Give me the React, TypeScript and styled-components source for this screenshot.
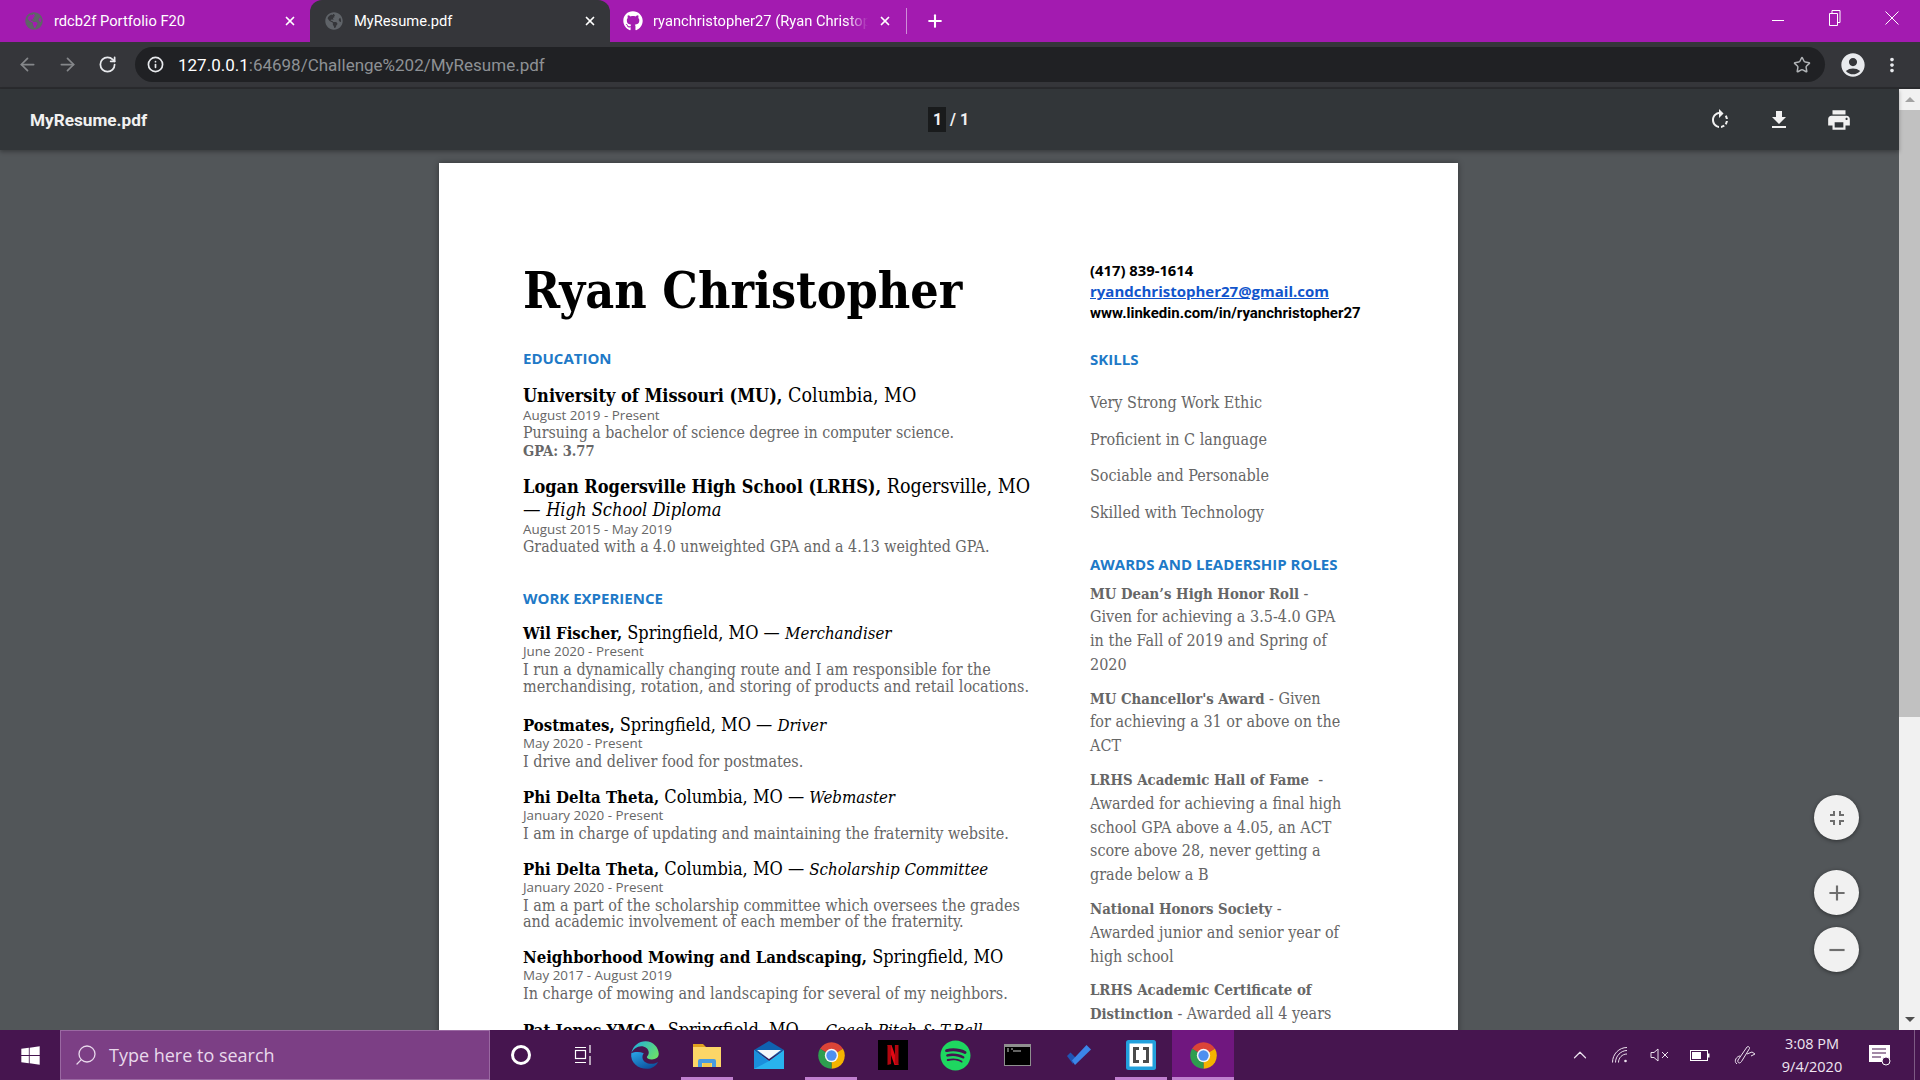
import React from 'react';
import styled, { createGlobalStyle } from 'styled-components';
import { ArrowLeft, ArrowRight, ChevronUp, Info, Plus, RotateCw, Search, Star, X } from 'lucide-react';
import { FaGithub, FaGlobeAmericas, FaSpotify, FaWindows } from 'react-icons/fa';
import { MdAccountCircle, MdAdd, MdFileDownload, MdFullscreenExit, MdMoreVert, MdPrint, MdRemove, MdRotateRight } from 'react-icons/md';

const SERIF = '"DejaVu Serif Condensed", "DejaVu Serif", "Liberation Serif", serif';
const SANS = '"Open Sans", "Noto Sans", sans-serif';

const GlobalStyle = createGlobalStyle`
  html, body { margin: 0; padding: 0; height: 100%; overflow: hidden; }
  body { font-family: ${SANS}; background: #525659; }
  * { box-sizing: border-box; }
`;

const Screen = styled.div`
  width: 1920px;
  height: 1080px;
  display: flex;
  flex-direction: column;
  overflow: hidden;
`;

/* chrome tabs */
const TabStrip = styled.div`
  flex: 0 0 42px;
  background: #a31bb0;
  display: flex;
  padding-left: 10px;
`;

const Tab = styled.div<{ $active?: boolean; $width?: number; $inset?: number }>`
  width: ${(p) => p.$width ?? 300}px;
  display: flex;
  align-items: center;
  gap: ${(p) => (p.$inset ? 10 : 11)}px;
  padding: 0 13px 0 ${(p) => p.$inset ?? 15}px;
  color: #fff;
  font-family: Roboto, sans-serif;
  font-size: 14.7px;
  background: ${(p) => (p.$active ? '#35363a' : 'transparent')};
  border-radius: ${(p) => (p.$active ? '12px 12px 0 0' : '0')};
`;

const TabTitle = styled.span<{ $fade?: boolean }>`
  flex: 1;
  white-space: nowrap;
  overflow: hidden;
  ${(p) => (p.$fade ? 'mask-image: linear-gradient(to right, #000 90%, transparent);' : '')}
`;

const TabDivider = styled.div`
  width: 1px;
  height: 26px;
  margin: 8px 0 0 1px;
  background: #cf8ed8;
`;

const NewTab = styled.div`
  width: 56px;
  display: flex;
  align-items: center;
  justify-content: center;
  color: #fff;
`;

const WindowControls = styled.div`
  margin-left: auto;
  display: flex;
  color: #fff;
`;

const WindowButton = styled.div`
  width: 57px;
  height: 36px;
  display: flex;
  align-items: center;
  justify-content: center;
`;

/* address bar */
const Toolbar = styled.div`
  flex: 0 0 47px;
  background: #35363a;
  border-bottom: 2px solid #2a2b2e;
  display: flex;
  align-items: flex-start;
  padding-top: 5px;
  color: #8f9194;
`;

const NavButton = styled.div<{ $light?: boolean; $width?: number }>`
  width: ${(p) => p.$width ?? 40}px;
  height: 35px;
  display: flex;
  align-items: center;
  justify-content: center;
  color: ${(p) => (p.$light ? '#e8eaed' : '#85878a')};
`;

const NavGroup = styled.div`
  display: flex;
  width: 135px;
  padding-left: 7px;
`;

const Omnibox = styled.div`
  width: 1690px;
  height: 35px;
  border-radius: 18px;
  background: #202124;
  display: flex;
  align-items: center;
  padding: 0 14px 0 12px;
  gap: 14px;
  font-family: Roboto, sans-serif;
  font-size: 17px;
  color: #8e9195;
`;

const Host = styled.span`
  color: #fff;
`;

const Url = styled.span`
  flex: 1;
`;

/* pdf viewer */
const PdfArea = styled.div`
  flex: 1;
  min-height: 0;
  display: flex;
`;

const PdfMain = styled.div`
  flex: 1;
  min-width: 0;
  display: flex;
  flex-direction: column;
`;

const PdfBar = styled.div`
  flex: 0 0 61px;
  background: #323639;
  box-shadow: 0 2px 4px rgba(0, 0, 0, 0.3);
  display: flex;
  align-items: center;
  padding: 0 0 0 30px;
  color: #f1f1f1;
  position: relative;
  z-index: 2;
`;

const PdfName = styled.div`
  width: 898px;
  font-family: Roboto, sans-serif;
  font-weight: 700;
  font-size: 17.2px;
`;

const PageCount = styled.div`
  font-family: Roboto, sans-serif;
  font-weight: 700;
  font-size: 16px;
  display: flex;
  align-items: center;
  gap: 4px;
`;

const PageNumber = styled.span`
  background: #191b1c;
  width: 18px;
  height: 25px;
  line-height: 25px;
  padding-left: 5px;
`;

const PdfActions = styled.div`
  margin-left: auto;
  display: flex;
  align-items: center;
  gap: 35px;
  margin-right: 47px;
`;

const Viewer = styled.div`
  flex: 1;
  min-height: 0;
  position: relative;
  overflow: hidden;
  background: #525659;
  display: flex;
  justify-content: center;
  padding-top: 13px;
`;

const ScrollBar = styled.div`
  width: 21px;
  background: #f1f1f1;
  display: flex;
  flex-direction: column;
  align-items: center;
`;

const ScrollArrow = styled.div<{ $down?: boolean }>`
  height: 21px;
  flex: none;
  display: flex;
  align-items: center;
  &::before {
    content: '';
    border-left: 5px solid transparent;
    border-right: 5px solid transparent;
    ${(p) => (p.$down ? 'border-top: 5px solid #505050;' : 'border-bottom: 5px solid #a3a3a3;')}
  }
`;

const ScrollThumb = styled.div`
  width: 100%;
  height: 607px;
  background: #c1c1c1;
  margin-bottom: auto;
`;

const ZoomStack = styled.div`
  position: absolute;
  left: 1814px;
  top: 645px;
  display: flex;
  flex-direction: column;
`;

const ZoomButton = styled.div<{ $gap?: number }>`
  width: 45px;
  height: 45px;
  border-radius: 50%;
  margin-top: ${(p) => p.$gap ?? 0}px;
  background: #f1f1f1;
  color: #6e6e6e;
  box-shadow: 0 1px 4px rgba(0, 0, 0, 0.45);
  display: flex;
  align-items: center;
  justify-content: center;
`;

/* resume page */
const Page = styled.div`
  width: 1019px;
  height: 1200px;
  flex: none;
  margin-right: 2px;
  background: #fff;
  box-shadow: 0 0 6px rgba(0, 0, 0, 0.4);
  padding: 98px 0 0 84px;
  display: grid;
  grid-template-columns: 527px 1fr;
  column-gap: 40px;
  align-content: start;
`;

const Column = styled.div`
  display: flex;
  flex-direction: column;
  align-items: flex-start;
`;

const Name = styled.h1`
  margin: 0;
  font-family: ${SERIF};
  font-weight: 700;
  font-size: 49.7px;
  line-height: 60px;
  color: #000;
  white-space: nowrap;
`;

const SectionHeading = styled.h2<{ $gap: number }>`
  margin: ${(p) => p.$gap}px 0 0;
  font-family: ${SANS};
  font-weight: 700;
  font-size: 15px;
  line-height: 20px;
  color: #2079c7;
  white-space: nowrap;
`;

const Entry = styled.div<{ $gap: number }>`
  margin-top: ${(p) => p.$gap}px;
`;

const EntryTitle = styled.div<{ $edu?: boolean }>`
  font-family: ${SERIF};
  font-size: ${(p) => (p.$edu ? 19.5 : 18)}px;
  line-height: ${(p) => (p.$edu ? 23 : 18)}px;
  padding-top: ${(p) => (p.$edu ? 1.5 : 3.75)}px;
  color: #000;
  white-space: nowrap;
  b { font-weight: 700; font-size: 0.923em; }
  i { font-style: italic; font-size: 0.93em; }
`;

const EntryDate = styled.div<{ $after?: number; $line?: number }>`
  margin-bottom: ${(p) => p.$after ?? 0}px;
  font-family: ${SANS};
  font-size: 13.4px;
  line-height: ${(p) => p.$line ?? 17.5}px;
  color: #666;
  white-space: nowrap;
`;

const EntryBody = styled.div<{ $edu?: boolean }>`
  font-family: ${SERIF};
  font-size: ${(p) => (p.$edu ? 15.8 : 16)}px;
  line-height: ${(p) => (p.$edu ? 17 : 16.5)}px;
  color: #666;
  white-space: nowrap;
`;

const Gpa = styled(EntryBody)`
  margin-top: 0.5px;
  font-weight: 700;
  font-size: 14.6px;
`;

const ContactLine = styled.div<{ $font: string; $size: number; $line?: number; $lift?: number }>`
  margin-top: ${(p) => -(p.$lift ?? 0)}px;
  font-family: ${(p) => p.$font};
  font-weight: 700;
  font-size: ${(p) => p.$size}px;
  line-height: ${(p) => p.$line ?? 21}px;
  color: #000;
  white-space: nowrap;
`;

const MailLink = styled.a`
  color: #1155cc;
  text-decoration: underline;
`;

const Skill = styled.div<{ $first?: boolean }>`
  margin-top: ${(p) => (p.$first ? 23.5 : 14.5)}px;
  font-family: ${SERIF};
  font-size: 16px;
  line-height: 22px;
  color: #666;
`;

const Award = styled.div<{ $first?: boolean }>`
  margin-top: ${(p) => (p.$first ? 8 : 10)}px;
  font-family: ${SERIF};
  font-size: 16px;
  line-height: 23.8px;
  color: #666;
  white-space: nowrap;
  b { font-weight: 700; font-size: 0.925em; }
`;

/* windows taskbar */
const Taskbar = styled.div`
  flex: 0 0 50px;
  background: #46154f;
  display: flex;
  align-items: stretch;
  color: #fff;
`;

const StartButton = styled.div`
  width: 60px;
  display: flex;
  align-items: center;
  justify-content: center;
`;

const SearchBox = styled.div`
  width: 430px;
  background: #7c3f85;
  border: 1px solid #9a69a2;
  display: flex;
  align-items: center;
  gap: 11px;
  padding-left: 13px;
  color: #e9d9ec;
  font-size: 18px;
`;

const FlippedSearch = styled(Search)`
  transform: scaleX(-1);
`;

const IconSlot = styled.div<{ $open?: boolean; $active?: boolean }>`
  width: 62px;
  position: relative;
  display: flex;
  align-items: center;
  justify-content: center;
  background: ${(p) => (p.$active ? '#70177f' : 'transparent')};
  &::after {
    content: '';
    display: ${(p) => (p.$open ? 'block' : 'none')};
    position: absolute;
    left: ${(p) => (p.$active ? 0 : 5)}px;
    right: ${(p) => (p.$active ? 0 : 5)}px;
    bottom: 0;
    height: 3px;
    background: #c07fcf;
  }
`;

const Cortana = styled.div`
  width: 20px;
  height: 20px;
  border-radius: 50%;
  border: 3px solid #fff;
`;

const Tray = styled.div`
  margin-left: auto;
  display: flex;
  align-items: center;
`;

const TrayIcon = styled.div<{ $gap?: number }>`
  width: 40px;
  margin-left: ${(p) => p.$gap ?? 0}px;
  color: #ece2ee;
  display: flex;
  align-items: center;
  justify-content: center;
`;

const Clock = styled.div`
  width: 80px;
  margin-left: 7px;
  text-align: center;
  font-size: 14.5px;
  line-height: 23px;
  color: #efe6f1;
`;

const Notice = styled.div`
  width: 62px;
  padding-right: 6px;
  display: flex;
  align-items: center;
  justify-content: center;
`;

const ShowDesktop = styled.div`
  width: 6px;
  align-self: stretch;
  border-left: 1px solid #7d5a84;
`;

/* drawn logos */
const ChromeLogo = () => (
  <svg width="29" height="29" viewBox="0 0 48 48">
    <path d="M24 24L4.95 13A22 22 0 0 1 43.05 13z" fill="#db4437" />
    <path d="M24 24L43.05 13A22 22 0 0 1 24 46z" fill="#f4b400" />
    <path d="M24 24L24 46A22 22 0 0 1 4.95 13z" fill="#2e9e4f" />
    <circle cx="24" cy="24" r="11" fill="#f5f5f5" />
    <circle cx="24" cy="24" r="8.5" fill="#4d8ff0" />
  </svg>
);

const EdgeLogo = () => (
  <svg width="30" height="30" viewBox="0 0 48 48">
    <defs>
      <linearGradient id="edgeTop" x1="0" y1="0.2" x2="1" y2="0.7">
        <stop offset="0" stopColor="#1fb0dc" />
        <stop offset="1" stopColor="#6ae06a" />
      </linearGradient>
      <linearGradient id="edgeLow" x1="0" y1="0" x2="0.7" y2="1">
        <stop offset="0" stopColor="#2aa8e8" />
        <stop offset="1" stopColor="#0c4f9c" />
      </linearGradient>
    </defs>
    <path d="M2 21C0 36 13 46 27 46c8 0 14-4 18-11-7 4-15 4-21 0-5-4-5-10-2-14-7-3-15-2-20 0z" fill="url(#edgeLow)" />
    <path d="M2 21C5 9 14 2 25 2c12 0 21 10 21 20 0 6-5 9-11 9-5 0-8-2-8-4 1-2 3-3 3-7 0-6-6-10-12-10C11 10 5 15 2 21z" fill="url(#edgeTop)" />
  </svg>
);

const FolderLogo = () => (
  <svg width="28" height="24" viewBox="0 0 28 24">
    <path d="M0 1h10l3 3H0z" fill="#dfa11f" />
    <rect y="4" width="28" height="20" fill="#fcd667" />
    <path d="M5 24v-6a2 2 0 0 1 2-2h14a2 2 0 0 1 2 2v6h-4v-4H9v4z" fill="#4a9ce0" />
    <rect x="10" y="20" width="8" height="4" fill="#f5c84d" />
  </svg>
);

const MailLogo = () => (
  <svg width="30" height="28" viewBox="0 0 30 28">
    <path d="M0 9L15 0l15 9-15 9z" fill="#0f62b0" />
    <path d="M3 9h24l-12 9z" fill="#f4f8fb" />
    <path d="M0 9l15 11L30 9v19H0z" fill="#29b2ee" />
    <path d="M0 9l15 11L0 28z" fill="#1a8fdc" />
  </svg>
);

const NetflixLogo = () => (
  <svg width="30" height="30" viewBox="0 0 30 30">
    <rect width="30" height="30" fill="#000" />
    <path d="M9.5 5h4l7 20h-4z" fill="#e50914" />
    <path d="M9.5 5h3.6v19l-3.6 1zM16.9 5h3.6v20l-3.6-1z" fill="#b1060f" />
  </svg>
);

const TerminalLogo = () => (
  <svg width="27" height="22" viewBox="0 0 27 22">
    <rect x="0.5" y="0.5" width="26" height="21" fill="#000" stroke="#8f8f8f" />
    <rect x="1" y="1" width="25" height="2" fill="#8f8f8f" />
    <path d="M3 5h2M3 7h2M7 5h2M9 7h8" stroke="#c8c8c8" strokeWidth="1" />
  </svg>
);

const TodoLogo = () => (
  <svg width="24" height="20" viewBox="0 0 24 20">
    <path d="M0 11l3.5-3.5L9 13l-3 6z" fill="#1f55b5" />
    <path d="M5 15.5L19.5 0 24 4.5 8 20z" fill="#3b86e8" />
  </svg>
);

const BracketsLogo = () => (
  <svg width="30" height="30" viewBox="0 0 30 30">
    <rect width="30" height="30" rx="2.5" fill="#22a0dc" />
    <rect x="3.5" y="3.5" width="23" height="23" fill="#fff" />
    <path d="M13 8.5H8.5v13H13M17 8.5h4.5v13H17" fill="none" stroke="#4b4b4b" strokeWidth="3" />
  </svg>
);

const TaskViewIcon = () => (
  <svg width="20" height="20" viewBox="0 0 20 20" fill="none" stroke="#fff" strokeWidth="1.2">
    <rect x="2.5" y="5.5" width="10" height="8" />
    <path d="M2 2.5h11M2 17.5h11M17 0v8M17 11v9" />
  </svg>
);

const WifiIcon = () => (
  <svg width="16" height="16" viewBox="0 0 16 16" fill="none" stroke="#ece2ee" strokeWidth="1">
    <path d="M0.5 15.5C0.5 7 7 0.5 15 0.5M3.5 15.5C3.5 9 9 3.5 15 3.5M6.5 15.5C6.5 11 10 7 15 7" />
    <circle cx="13.5" cy="14" r="1.3" fill="#ece2ee" stroke="none" />
  </svg>
);

const VolumeIcon = () => (
  <svg width="20" height="14" viewBox="0 0 20 14" fill="none" stroke="#ece2ee" strokeWidth="1">
    <path d="M1 4.5h3l4-3.5v12l-4-3.5H1zM12 4l6 6M18 4l-6 6" />
  </svg>
);

const BatteryIcon = () => (
  <svg width="20" height="11" viewBox="0 0 20 11">
    <rect x="0.5" y="0.5" width="17" height="10" fill="none" stroke="#fff" />
    <rect x="2" y="2" width="9" height="7" fill="#fff" />
    <rect x="18" y="3.5" width="1.5" height="4" fill="#fff" />
  </svg>
);

const PenIcon = () => (
  <svg width="22" height="20" viewBox="0 0 22 20" fill="none" stroke="#ece2ee" strokeWidth="1">
    <path d="M4 15l9-13c1-1 3 0 2.5 1.5l-8 13C6 19 3 18 4 15z" />
    <path d="M3 19c-4-3 0-8 3-8M13 9l5-2 3 2-4 2" />
  </svg>
);

const NoticeIcon = () => (
  <svg width="24" height="22" viewBox="0 0 24 22">
    <path d="M1 1h21v17H1z" fill="#fff" />
    <path d="M4 5h14M4 9h14M4 13h9" stroke="#46154f" strokeWidth="1.2" />
    <circle cx="18" cy="17" r="4" fill="#46154f" stroke="#fff" />
  </svg>
);

const entries = [
  { id: 'wil', gap: 12.3, date: 'June 2020 - Present', title: <><b>Wil Fischer,</b> Springfield, MO — <i>Merchandiser</i></>, body: ['I run a dynamically changing route and I am responsible for the', 'merchandising, rotation, and storing of products and retail locations.'] },
  { id: 'postmates', gap: 17, date: 'May 2020 - Present', title: <><b>Postmates,</b> Springfield, MO — <i>Driver</i></>, body: ['I drive and deliver food for postmates.'] },
  { id: 'web', gap: 13.5, date: 'January 2020 - Present', title: <><b>Phi Delta Theta,</b> Columbia, MO — <i>Webmaster</i></>, body: ['I am in charge of updating and maintaining the fraternity website.'] },
  { id: 'schol', gap: 13.5, date: 'January 2020 - Present', title: <><b>Phi Delta Theta,</b> Columbia, MO — <i>Scholarship Committee</i></>, body: ['I am a part of the scholarship committee which oversees the grades', 'and academic involvement of each member of the fraternity.'] },
  { id: 'mow', gap: 14, date: 'May 2017 - August 2019', title: <><b>Neighborhood Mowing and Landscaping,</b> Springfield, MO</>, body: ['In charge of mowing and landscaping for several of my neighbors.'] },
  { id: 'ymca', gap: 14, date: '', title: <><b>Pat Jones YMCA,</b> Springfield, MO — <i>Coach Pitch &amp; T-Ball</i></>, body: [] },
];

const skills = ['Very Strong Work Ethic', 'Proficient in C language', 'Sociable and Personable', 'Skilled with Technology'];

const awards = [
  { id: 'dean', lines: [<><b>MU Dean’s High Honor Roll</b> -</>, 'Given for achieving a 3.5-4.0 GPA', 'in the Fall of 2019 and Spring of', '2020'] },
  { id: 'chan', lines: [<><b>MU Chancellor's Award</b> - Given</>, 'for achieving a 31 or above on the', 'ACT'] },
  { id: 'fame', lines: [<><b>LRHS Academic Hall of Fame</b>&nbsp; -</>, 'Awarded for achieving a final high', 'school GPA above a 4.05, an ACT', 'score above 28, never getting a', 'grade below a B'] },
  { id: 'nhs', lines: [<><b>National Honors Society</b> -</>, 'Awarded junior and senior year of', 'high school'] },
  { id: 'cert', lines: [<b key="b">LRHS Academic Certificate of</b>, <><b>Distinction</b> - Awarded all 4 years</>] },
];

const App: React.FC = () => {
  return (
    <Screen>
      <GlobalStyle />
      <TabStrip>
        <Tab>
          <FaGlobeAmericas size={18} color="#5f6368" />
          <TabTitle>rdcb2f Portfolio F20</TabTitle>
          <X size={14} strokeWidth={3} />
        </Tab>
        <Tab $active>
          <FaGlobeAmericas size={18} color="#5f6368" />
          <TabTitle>MyResume.pdf</TabTitle>
          <X size={14} strokeWidth={3} />
        </Tab>
        <Tab $width={295} $inset={13}>
          <FaGithub size={20} />
          <TabTitle $fade>ryanchristopher27 (Ryan Christopher)</TabTitle>
          <X size={14} strokeWidth={3} />
        </Tab>
        <TabDivider />
        <NewTab>
          <Plus size={20} strokeWidth={2.5} />
        </NewTab>
        <WindowControls>
          <WindowButton>
            <svg width="14" height="14" viewBox="0 0 14 14"><path d="M1 9.5h12" stroke="#fff" /></svg>
          </WindowButton>
          <WindowButton>
            <svg width="14" height="16" viewBox="0 0 14 16" fill="none" stroke="#fff"><path d="M1.5 3.5h8v12h-8zM4 3V.5h8v12h-2" /></svg>
          </WindowButton>
          <WindowButton>
            <svg width="14" height="14" viewBox="0 0 14 14"><path d="M0.5 0.5l13 13M13.5 0.5l-13 13" stroke="#fff" /></svg>
          </WindowButton>
        </WindowControls>
      </TabStrip>

      <Toolbar>
        <NavGroup>
          <NavButton><ArrowLeft size={21} /></NavButton>
          <NavButton><ArrowRight size={21} /></NavButton>
          <NavButton $light><RotateCw size={19} strokeWidth={2.2} /></NavButton>
        </NavGroup>
        <Omnibox>
          <Info size={17} color="#e8eaed" strokeWidth={2.4} />
          <Url><Host>127.0.0.1</Host>:64698/Challenge%202/MyResume.pdf</Url>
          <Star size={18} color="#b0b3b6" />
        </Omnibox>
        <NavButton $light $width={56}><MdAccountCircle size={28} /></NavButton>
        <NavButton $light $width={22}><MdMoreVert size={24} /></NavButton>
      </Toolbar>

      <PdfArea>
        <PdfMain>
          <PdfBar>
            <PdfName>MyResume.pdf</PdfName>
            <PageCount>
              <PageNumber>1</PageNumber>
              <span>/</span>
              <span>1</span>
            </PageCount>
            <PdfActions>
              <MdRotateRight size={24} />
              <MdFileDownload size={24} />
              <MdPrint size={26} />
            </PdfActions>
          </PdfBar>
          <Viewer>
            <Page>
              <Column>
                <Name>Ryan Christopher</Name>
                <SectionHeading $gap={27}>EDUCATION</SectionHeading>
                <Entry $gap={14}>
                  <EntryTitle $edu><b>University of Missouri (MU),</b> Columbia, MO</EntryTitle>
                  <EntryDate>August 2019 - Present</EntryDate>
                  <EntryBody $edu>Pursuing a bachelor of science degree in computer science.</EntryBody>
                  <Gpa $edu>GPA: 3.77</Gpa>
                </Entry>
                <Entry $gap={14.5}>
                  <EntryTitle $edu>
                    <b>Logan Rogersville High School (LRHS),</b> Rogersville, MO
                    <br />— <i>High School Diploma</i>
                  </EntryTitle>
                  <EntryDate>August 2015 - May 2019</EntryDate>
                  <EntryBody $edu>Graduated with a 4.0 unweighted GPA and a 4.13 weighted GPA.</EntryBody>
                </Entry>
                <SectionHeading $gap={33.4}>WORK EXPERIENCE</SectionHeading>
                {entries.map((e) => (
                  <Entry key={e.id} $gap={e.gap}>
                    <EntryTitle>{e.title}</EntryTitle>
                    <EntryDate $line={18} $after={2}>{e.date}</EntryDate>
                    {e.body.map((line) => (
                      <EntryBody key={line}>{line}</EntryBody>
                    ))}
                  </Entry>
                ))}
              </Column>
              <Column>
                <ContactLine $font={SANS} $size={14.8} $lift={1}>(417) 839-1614</ContactLine>
                <ContactLine $font={SANS} $size={15}><MailLink>ryandchristopher27@gmail.com</MailLink></ContactLine>
                <ContactLine $font="Roboto, sans-serif" $size={15} $line={23}>www.linkedin.com/in/ryanchristopher27</ContactLine>
                <SectionHeading $gap={23.5}>SKILLS</SectionHeading>
                {skills.map((s, i) => (
                  <Skill key={s} $first={i === 0}>{s}</Skill>
                ))}
                <SectionHeading $gap={30}>AWARDS AND LEADERSHIP ROLES</SectionHeading>
                {awards.map((a, i) => (
                  <Award key={a.id} $first={i === 0}>
                    {a.lines.map((line, j) => (
                      <div key={j}>{line}</div>
                    ))}
                  </Award>
                ))}
              </Column>
            </Page>
            <ZoomStack>
              <ZoomButton><MdFullscreenExit size={24} /></ZoomButton>
              <ZoomButton $gap={30}><MdAdd size={26} /></ZoomButton>
              <ZoomButton $gap={12}><MdRemove size={26} /></ZoomButton>
            </ZoomStack>
          </Viewer>
        </PdfMain>
        <ScrollBar>
          <ScrollArrow />
          <ScrollThumb />
          <ScrollArrow $down />
        </ScrollBar>
      </PdfArea>

      <Taskbar>
        <StartButton><FaWindows size={21} /></StartButton>
        <SearchBox>
          <FlippedSearch size={24} strokeWidth={1.3} />
          <span>Type here to search</span>
        </SearchBox>
        <IconSlot><Cortana /></IconSlot>
        <IconSlot><TaskViewIcon /></IconSlot>
        <IconSlot><EdgeLogo /></IconSlot>
        <IconSlot $open><FolderLogo /></IconSlot>
        <IconSlot><MailLogo /></IconSlot>
        <IconSlot $open><ChromeLogo /></IconSlot>
        <IconSlot><NetflixLogo /></IconSlot>
        <IconSlot><FaSpotify size={31} color="#1ed760" /></IconSlot>
        <IconSlot><TerminalLogo /></IconSlot>
        <IconSlot><TodoLogo /></IconSlot>
        <IconSlot $open><BracketsLogo /></IconSlot>
        <IconSlot $open $active><ChromeLogo /></IconSlot>
        <Tray>
          <TrayIcon><ChevronUp size={22} strokeWidth={1.3} /></TrayIcon>
          <TrayIcon><WifiIcon /></TrayIcon>
          <TrayIcon><VolumeIcon /></TrayIcon>
          <TrayIcon><BatteryIcon /></TrayIcon>
          <TrayIcon $gap={5}><PenIcon /></TrayIcon>
          <Clock>3:08 PM<br />9/4/2020</Clock>
          <Notice><NoticeIcon /></Notice>
          <ShowDesktop />
        </Tray>
      </Taskbar>
    </Screen>
  );
};

export default App;
